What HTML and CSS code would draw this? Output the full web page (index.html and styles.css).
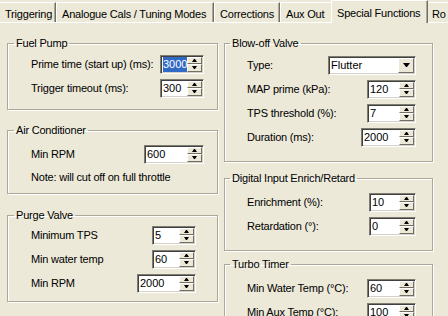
FILE: index.html
```html
<!DOCTYPE html>
<html lang="en">
<head>
    <meta charset="UTF-8">
    <title>Special Functions</title>
    <link rel="stylesheet" href="styles.css">
</head>
<body>
    <div class="tabs">
        <div class="tab tab-trig">Triggering</div>
        <div class="tab tab-cals">Analogue Cals / Tuning Modes</div>
        <div class="tab tab-corr">Corrections</div>
        <div class="tab tab-aux">Aux Out</div>
        <div class="tab tab-active">Special Functions</div>
        <div class="tab tab-last">Ro</div>
    </div>

    <div class="page">
        <div class="column column-left">
            <fieldset class="group group-fuel">
                <legend>Fuel Pump</legend>
                <div class="row">
                    <span class="label">Prime time (start up) (ms):</span>
                    <div class="spin w44"><span class="value"><span class="selected">3000</span></span><span class="arrows"><i class="up"></i><i class="down"></i></span></div>
                </div>
                <div class="row">
                    <span class="label">Trigger timeout (ms):</span>
                    <div class="spin w44"><span class="value">300</span><span class="arrows"><i class="up"></i><i class="down"></i></span></div>
                </div>
            </fieldset>

            <fieldset class="group group-air">
                <legend>Air Conditioner</legend>
                <div class="row">
                    <span class="label">Min RPM</span>
                    <div class="spin w60"><span class="value">600</span><span class="arrows"><i class="up"></i><i class="down"></i></span></div>
                </div>
                <div class="row row-note">
                    <span class="label">Note: will cut off on full throttle</span>
                </div>
            </fieldset>

            <fieldset class="group group-purge">
                <legend>Purge Valve</legend>
                <div class="row">
                    <span class="label">Minimum TPS</span>
                    <div class="spin w44"><span class="value">5</span><span class="arrows"><i class="up"></i><i class="down"></i></span></div>
                </div>
                <div class="row">
                    <span class="label">Min water temp</span>
                    <div class="spin w44"><span class="value">60</span><span class="arrows"><i class="up"></i><i class="down"></i></span></div>
                </div>
                <div class="row">
                    <span class="label">Min RPM</span>
                    <div class="spin w59"><span class="value">2000</span><span class="arrows"><i class="up"></i><i class="down"></i></span></div>
                </div>
            </fieldset>
        </div>

        <div class="column column-right">
            <fieldset class="group group-blowoff">
                <legend>Blow-off Valve</legend>
                <div class="row">
                    <span class="label">Type:</span>
                    <div class="combo"><span class="value">Flutter</span><span class="drop"><i></i></span></div>
                </div>
                <div class="row">
                    <span class="label">MAP prime (kPa):</span>
                    <div class="spin w49"><span class="value">120</span><span class="arrows"><i class="up"></i><i class="down"></i></span></div>
                </div>
                <div class="row">
                    <span class="label">TPS threshold (%):</span>
                    <div class="spin w49"><span class="value">7</span><span class="arrows"><i class="up"></i><i class="down"></i></span></div>
                </div>
                <div class="row">
                    <span class="label">Duration (ms):</span>
                    <div class="spin w55"><span class="value">2000</span><span class="arrows"><i class="up"></i><i class="down"></i></span></div>
                </div>
            </fieldset>

            <fieldset class="group group-digital">
                <legend>Digital Input Enrich/Retard</legend>
                <div class="row">
                    <span class="label">Enrichment (%):</span>
                    <div class="spin w47"><span class="value">10</span><span class="arrows"><i class="up"></i><i class="down"></i></span></div>
                </div>
                <div class="row">
                    <span class="label">Retardation (°):</span>
                    <div class="spin w47"><span class="value">0</span><span class="arrows"><i class="up"></i><i class="down"></i></span></div>
                </div>
            </fieldset>

            <fieldset class="group group-turbo">
                <legend>Turbo Timer</legend>
                <div class="row">
                    <span class="label">Min Water Temp (°C):</span>
                    <div class="spin w49"><span class="value">60</span><span class="arrows"><i class="up"></i><i class="down"></i></span></div>
                </div>
                <div class="row">
                    <span class="label">Min Aux Temp (°C):</span>
                    <div class="spin w49"><span class="value">100</span><span class="arrows"><i class="up"></i><i class="down"></i></span></div>
                </div>
            </fieldset>
        </div>
    </div>
</body>
</html>
```

FILE: styles.css
```css
/* Page */
html, body {
    margin: 0;
    overflow: hidden;
}

body {
    width: 448px;
    height: 316px;
    background-color: #ece9d8;
    color: #000;
    font-family: "Liberation Sans", Arial, sans-serif;
    font-size: 11px;
    letter-spacing: -0.2px;
}

/* Tab strip */
.tabs {
    display: flex;
    align-items: flex-start;
    height: 23px;
    margin-left: -1px;
    box-shadow: inset 0 -1px 0 #fff;
}

.tab {
    flex: none;
    height: 20px;
    margin-top: 2px;
    padding: 4px 0 0 5px;
    box-sizing: border-box;
    border-top: 1px solid #fff;
    border-left: 1px solid #fff;
    border-right: 1px solid #716f64;
    box-shadow: inset -1px 0 0 #aca899;
    line-height: 14px;
    white-space: nowrap;
    overflow: hidden;
}

/* Tab widths */
.tab-trig {width: 57px;}
.tab-cals {width: 158px;}
.tab-corr {width: 66px;}
.tab-aux {width: 53px;}
.tab-last {width: 40px;}

.tab-active {
    position: relative;
    z-index: 1;
    width: 97px;
    height: 23px;
    margin: 0 -2px;
    padding-top: 5px;
    background-color: #ece9d8;
}

/* Columns */
.page {
    display: flex;
    gap: 6px;
    padding: 14px 0 0 7px;
}

.column {
    display: flex;
    flex-direction: column;
}

.column-left {width: 211px;}
.column-right {width: 209px;}

/* Group boxes */
.group {
    margin: 0;
    padding: 2px 13px 9px 23px;
    border: 1px solid #aca899;
    box-shadow: 1px 1px 0 #fff, inset 1px 1px 0 #fff;
    min-width: 0;
}

.group legend {
    margin-left: -17px;
    padding: 0 2px;
    line-height: 13px;
}

.group-air {margin-top: 14px; padding-top: 5px; padding-bottom: 5px;}
.group-purge {margin-top: 15px; padding-top: 1px; padding-right: 21px; padding-bottom: 6px;}

.column-right .group {padding-left: 22px; padding-right: 16px;}
.group-blowoff {padding-top: 3px; padding-bottom: 12px;}
.group-digital {margin-top: 10px; padding-top: 5px; padding-bottom: 12px;}
.group-turbo {margin-top: 7px; padding-top: 5px;}

/* Rows */
.row {
    display: flex;
    align-items: center;
    height: 24px;
}

.row-note {height: 22px;}

.label {
    flex: 1;
    white-space: nowrap;
}

/* Spin edit */
.spin, .combo {
    display: flex;
    height: 19px;
    box-sizing: border-box;
    border: 1px solid;
    border-color: #7f7d70 #fff #fff #7f7d70;
    box-shadow: inset 1px 1px 0 #404040, inset -1px -1px 0 #d4d0c8;
    background-color: #fff;
}

.w44 {width: 44px;}
.w47 {width: 47px;}
.w49 {width: 49px;}
.w55 {width: 55px;}
.w59 {width: 59px;}
.w60 {width: 60px;}

.value {
    flex: 1;
    padding: 1px 0 0 2px;
    line-height: 15px;
    letter-spacing: 0;
}

.selected {
    display: inline-block;
    background-color: #316ac5;
    color: #fff;
}

.arrows {
    display: flex;
    flex-direction: column;
    width: 15px;
    margin: 1px 1px 1px 0;
}

.arrows i {
    flex: 1;
    display: flex;
    align-items: center;
    justify-content: center;
    box-sizing: border-box;
    border: 1px solid;
    border-color: #fff #716f64 #716f64 #fff;
    background-color: #ece9d8;
}

.arrows i::after {
    content: "";
    width: 1px;
    border-left: 2px solid transparent;
    border-right: 2px solid transparent;
}

.arrows .up::after {border-bottom: 3px solid #000;}
.arrows .down::after {border-top: 3px solid #000;}

/* Combo box */
.combo {width: 88px;}

.drop {
    display: flex;
    align-items: center;
    justify-content: center;
    width: 16px;
    margin: 1px 1px 1px 0;
    box-sizing: border-box;
    border: 1px solid;
    border-color: #fff #716f64 #716f64 #fff;
    background-color: #ece9d8;
}

.drop i {
    width: 1px;
    border-left: 3px solid transparent;
    border-right: 3px solid transparent;
    border-top: 4px solid #000;
}
```
